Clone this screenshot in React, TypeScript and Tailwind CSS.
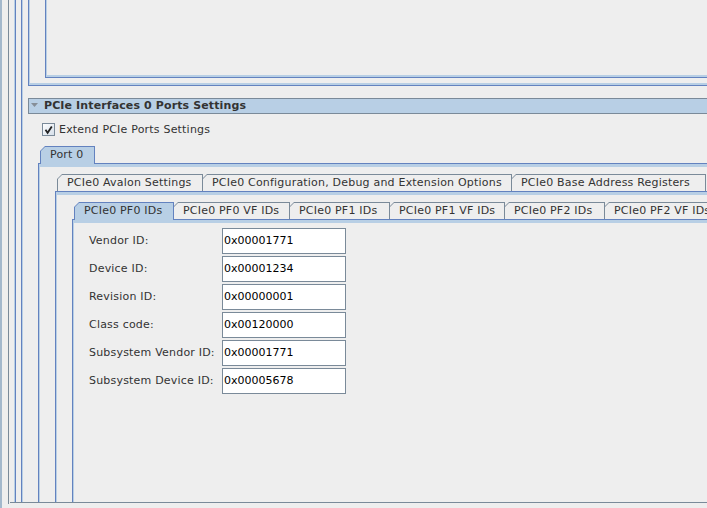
import React from 'react';

type TabDef = { w: number; label: string; selected?: boolean };

function Tab({ w, label, selected, first }: TabDef & { first: boolean }) {
  return (
    <div
      className={`shrink-0 ${first ? '' : '-ml-px'} ${
        selected ? 'relative z-10 -mb-px h-[18px] bg-[#6382BF]' : 'h-[17px] bg-[#7A8A99]'
      } [clip-path:polygon(0_5px,5px_0,100%_0,100%_100%,0_100%)]`}
      style={{ width: w }}
    >
      <div
        className={`mx-px mt-px ${
          selected ? 'h-[17px] bg-[#B8CFE5]' : 'h-[16px] bg-[#EEEEEE]'
        } overflow-hidden whitespace-nowrap pl-[9px] leading-[15px] text-[#333333] [clip-path:polygon(0_4px,4px_0,100%_0,100%_100%,0_100%)]`}
      >
        {label}
      </div>
    </div>
  );
}

function TabPanel({
  tabs,
  children,
  className = '',
}: {
  tabs: TabDef[];
  children?: React.ReactNode;
  className?: string;
}) {
  return (
    <div className={`flex min-w-0 flex-col ${className}`}>
      <div className="flex pl-[2px]">
        {tabs.map((t, i) => (
          <Tab key={t.label} {...t} first={i === 0} />
        ))}
      </div>
      <div className="flex flex-1 flex-col border-l border-t border-[#6382BF]">
        <div className="flex flex-1 flex-col border-l border-t-[3px] border-[#B8CFE5]">
          {children}
        </div>
      </div>
    </div>
  );
}

const fields: [string, string][] = [
  ['Vendor ID:', '0x00001771'],
  ['Device ID:', '0x00001234'],
  ['Revision ID:', '0x00000001'],
  ['Class code:', '0x00120000'],
  ['Subsystem Vendor ID:', '0x00001771'],
  ['Subsystem Device ID:', '0x00005678'],
];

export default function App() {
  return (
    <div className="flex h-[508px] w-[707px] overflow-hidden bg-[#EEEEEE] font-['DejaVu_Sans',sans-serif] text-[11px] tracking-[0.2px] text-[#333333]">
      <div className="w-[2px] shrink-0 bg-[#A3B8CC]" />
      <div className="w-[6px] shrink-0" />
      <div className="h-[504px] w-px shrink-0 bg-[#7A8A99]" />
      <div className="flex min-w-0 flex-1 flex-col">
        <div className="flex h-[502px] overflow-hidden pl-[5px]">
          <div className="flex min-w-0 flex-1 border-l border-[#B8CFE5]">
            <div className="flex min-w-0 flex-1 border-l border-[#6382BF] pl-[5px]">
              <div className="flex min-w-0 flex-1 border-l border-[#6382BF]">
                <div className="flex min-w-0 flex-1 flex-col border-l border-[#B8CFE5] pl-[5px]">
                  {/* previous section box (scrolled) */}
                  <div className="shrink-0 border-b border-l border-[#6382BF]">
                    <div className="border-b-2 border-l border-[#B8CFE5] pb-[5px] pl-[15px]">
                      <div className="border-b border-l border-[#6382BF]">
                        <div className="h-[77px] border-b-2 border-l border-[#B8CFE5]" />
                      </div>
                    </div>
                  </div>

                  {/* section header */}
                  <div className="mt-[12px] flex h-[16px] shrink-0 items-center border-y border-l border-[#7A8A99] bg-[#B8CFE5] pl-px">
                    <svg width="9" height="14" viewBox="0 0 9 14" className="shrink-0">
                      <polygon points="1,4 8,4 4.5,8" fill="#868E98" />
                    </svg>
                    <span className="ml-[5px] whitespace-nowrap font-bold leading-[14px] tracking-[0.12px] text-[#333333]">
                      PCIe Interfaces 0 Ports Settings
                    </span>
                  </div>

                  {/* checkbox */}
                  <div className="ml-[14px] mt-[9px] flex h-[13px] shrink-0 items-center">
                    <svg width="13" height="13" viewBox="0 0 13 13" className="shrink-0">
                      <defs>
                        <linearGradient id="cb" x1="0" y1="0" x2="1" y2="1">
                          <stop offset="0" stopColor="#FFFFFF" />
                          <stop offset="1" stopColor="#D4DEE9" />
                        </linearGradient>
                      </defs>
                      <rect x="0.5" y="0.5" width="12" height="12" fill="url(#cb)" stroke="#7A8A99" />
                      <path d="M3.5 6.8 L5.6 9.8 L9.8 3.4" fill="none" stroke="#222222" strokeWidth="1.8" />
                    </svg>
                    <span className="ml-[4px] whitespace-nowrap leading-[13px]">Extend PCIe Ports Settings</span>
                  </div>

                  {/* Port tabs */}
                  <TabPanel className="ml-[10px] mt-[10px] flex-1" tabs={[{ w: 55, label: 'Port 0', selected: true }]}>
                    <TabPanel
                      className="ml-[15px] mt-[7px] flex-1"
                      tabs={[
                        { w: 146, label: 'PCIe0 Avalon Settings' },
                        { w: 310, label: 'PCIe0 Configuration, Debug and Extension Options' },
                        { w: 195, label: 'PCIe0 Base Address Registers' },
                      ]}
                    >
                      <TabPanel
                        className="ml-[15px] mt-[7px] flex-1"
                        tabs={[
                          { w: 100, label: 'PCIe0 PF0 IDs', selected: true },
                          { w: 117, label: 'PCIe0 PF0 VF IDs' },
                          { w: 101, label: 'PCIe0 PF1 IDs' },
                          { w: 116, label: 'PCIe0 PF1 VF IDs' },
                          { w: 101, label: 'PCIe0 PF2 IDs' },
                          { w: 117, label: 'PCIe0 PF2 VF IDs' },
                        ]}
                      >
                        <div className="flex flex-col gap-[2px] pl-[15px] pt-[5px]">
                          {fields.map(([label, value]) => (
                            <div key={label} className="flex h-[26px] items-center">
                              <span className="w-[133px] shrink-0 whitespace-nowrap">{label}</span>
                              <div className="h-[26px] w-[124px] shrink-0 border border-[#7A8A99] bg-white pl-px leading-[24px] tracking-normal text-black">
                                {value}
                              </div>
                            </div>
                          ))}
                        </div>
                      </TabPanel>
                    </TabPanel>
                  </TabPanel>
                </div>
              </div>
            </div>
          </div>
        </div>
        <div className="ml-px h-px shrink-0 bg-[#7A8A99]" />
      </div>
    </div>
  );
}
